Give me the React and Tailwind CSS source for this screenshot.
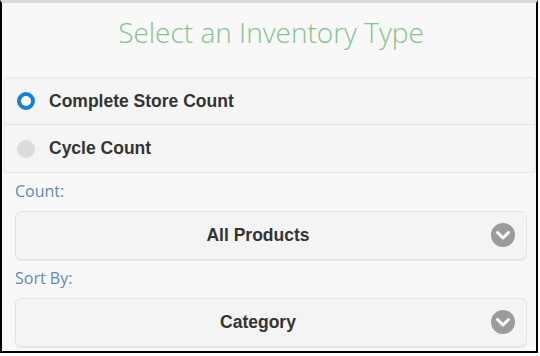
import React from 'react'

function Chevron() {
  return (
    <svg width="24" height="24" viewBox="0 0 24 24">
      <circle cx="12" cy="12" r="12" fill="#9b9b9b" />
      <path d="M6.5 9.5 L12 15 L17.5 9.5" fill="none" stroke="#fff" strokeWidth="3" strokeLinecap="round" strokeLinejoin="round" />
    </svg>
  )
}

function Select({ value }) {
  return (
    <div className="ml-[13px] mr-[9px] h-[49px] rounded-[6px] border border-[#e2e2e2] bg-[#f4f4f4] shadow-[0_1px_1px_rgba(0,0,0,0.06)] flex items-center relative">
      <span className="flex-1 text-center text-[17.5px] font-bold text-[#333] pr-[26px]" style={{ fontFamily: '"Liberation Sans", Arial, sans-serif' }}>{value}</span>
      <span className="absolute right-[11px] top-[11px]"><Chevron /></span>
    </div>
  )
}

export default function App() {
  const sans = { fontFamily: '"Liberation Sans", Arial, sans-serif' }
  const open = { fontFamily: '"Open Sans", "Noto Sans", sans-serif' }

  return (
    <div className="w-[540px] h-[356px] bg-white">
      <div className="w-[538px] h-[353px] border-x-2 border-b-2 border-black border-t-[3px] border-t-[#d9d9d9] bg-[#f8f8f8] flex flex-col">
        <div className="h-[74px] flex items-start justify-center pt-[9px] pl-[4px]">
          <h1 className="text-[28px] font-light text-[#84c490] leading-[40px]" style={open}>Select an Inventory Type</h1>
        </div>
        <div className="ml-[2px] border border-[#e6e6e6] rounded-[3px] bg-[#f5f5f5]">
          <div className="h-[47px] flex items-center border-b border-[#e3e3e3]">
            <span className="ml-[12px] w-[18px] h-[18px] rounded-full border-[4px] border-[#1a7fd0] bg-white" />
            <span className="ml-[14px] text-[17.5px] font-bold text-[#333]" style={sans}>Complete Store Count</span>
          </div>
          <div className="h-[47px] flex items-center">
            <span className="ml-[12px] w-[18px] h-[18px] rounded-full bg-[#dcdcdc]" />
            <span className="ml-[14px] text-[17.5px] font-bold text-[#333]" style={sans}>Cycle Count</span>
          </div>
        </div>
        <div className="h-[38px] flex items-center pl-[13px] pb-[3px] text-[16px] text-[#5f87c2]" style={open}>Count:</div>
        <Select value="All Products" />
        <div className="h-[38px] flex items-center pl-[13px] pb-[3px] text-[16px] text-[#5f87c2]" style={open}>Sort By:</div>
        <Select value="Category" />
      </div>
    </div>
  )
}
